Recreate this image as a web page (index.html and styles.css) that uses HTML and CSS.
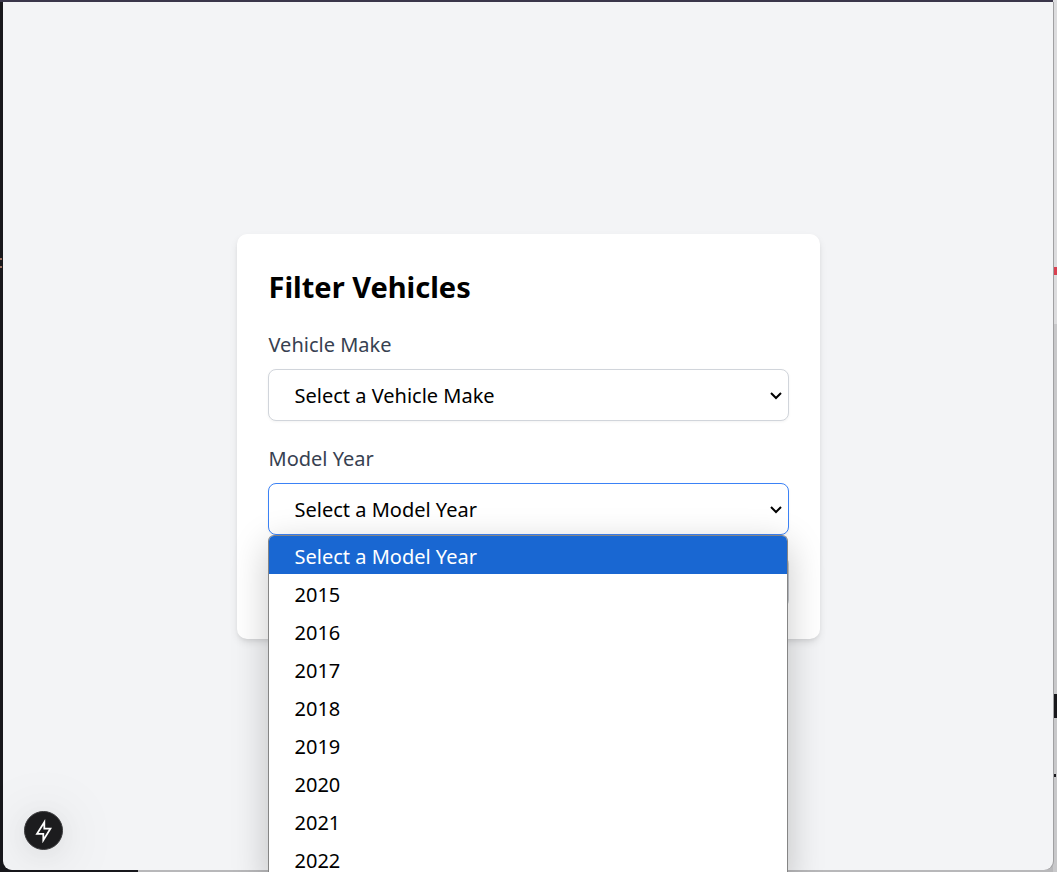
FILE: index.html
```html
<!DOCTYPE html>
<html lang="en">
<head>
<meta charset="utf-8">
<meta name="viewport" content="width=device-width, initial-scale=1">
<title>Filter Vehicles</title>
<link rel="stylesheet" href="styles.css">
</head>
<body>
<main class="window">
  <form class="card">
    <h1 class="title">Filter Vehicles</h1>
    <div class="field">
      <label class="label" for="make">Vehicle Make</label>
      <div class="control">
        <select class="select" id="make"><option>Select a Vehicle Make</option></select>
        <svg class="chevron" viewBox="0 0 14 10" aria-hidden="true"><path d="M2 3l5 5 5-5"/></svg>
      </div>
    </div>
    <div class="field">
      <label class="label" for="year">Model Year</label>
      <div class="control">
        <select class="select select-open" id="year"><option>Select a Model Year</option></select>
        <svg class="chevron" viewBox="0 0 14 10" aria-hidden="true"><path d="M2 3l5 5 5-5"/></svg>
        <ul class="menu" role="listbox" aria-label="Model Year">
          <li class="option option-active" role="option" aria-selected="true">Select a Model Year</li>
          <li class="option" role="option">2015</li>
          <li class="option" role="option">2016</li>
          <li class="option" role="option">2017</li>
          <li class="option" role="option">2018</li>
          <li class="option" role="option">2019</li>
          <li class="option" role="option">2020</li>
          <li class="option" role="option">2021</li>
          <li class="option" role="option">2022</li>
        </ul>
      </div>
    </div>
    <button class="submit" type="button" aria-label="Submit" disabled></button>
  </form>
  <button class="badge" type="button" aria-label="Static route">
    <svg class="bolt" viewBox="0 0 18 24" aria-hidden="true"><path d="M9.300 3.200L2 14.800h6.300v6.400L15.400 9.600H9.300z"/></svg>
  </button>
</main>
</body>
</html>
```
FILE: styles.css
```css
* { box-sizing: border-box; }

body {
  margin: 0;
  height: 100vh;
  padding: 2px 4px 2px 3px;
  overflow: hidden;
  font-family: "Segoe UI", "Noto Sans", sans-serif;
  font-size: 20px;
  line-height: 32px;
  color: #000;
  background:
    linear-gradient(#3a364a, #3a364a) 0 0 / calc(100% - 4px) 2px no-repeat,
    linear-gradient(#9a7060, #9a7060) 0 258px / 2px 2px no-repeat,
    linear-gradient(#9a7060, #9a7060) 0 266px / 2px 2px no-repeat,
    linear-gradient(#d84050, #d84050) 100% 267px / 3px 8px no-repeat,
    linear-gradient(#18181c, #18181c) 100% 694px / 4px 24px no-repeat,
    linear-gradient(#18181c, #18181c) calc(100% - 1px) 774px / 3px 3px no-repeat,
    linear-gradient(#18181c, #18181c) 0 0 / 3px 100% no-repeat,
    linear-gradient(#18181c, #18181c) 0 100% / 138px 12px no-repeat,
    linear-gradient(#dcdcde 0 324px, #c8c8ca 324px) 100% 0 / 4px 100% no-repeat,
    #b8b8ba;
}

.window {
  position: relative;
  height: 100%;
  display: grid;
  place-items: center;
  background: #f3f4f6;
  border-radius: 0 0 9px 9px;
  box-shadow: 1px 0 0 #a0a0a2;
}

.card {
  width: 100%;
  max-width: 583px;
  padding: 31px;
  display: flex;
  flex-direction: column;
  gap: 21px;
  background: #fff;
  border-radius: 10px;
  box-shadow: 0 4px 8px -1px #0000001a, 0 2px 5px -2px #0000001a;
}

.title {
  margin: 0;
  padding: 1px 1px 0;
  font-size: 29px;
  line-height: 41px;
  font-weight: 700;
}

.field {
  display: flex;
  flex-direction: column;
  gap: 8px;
}

.label {
  padding: 1px 1px 0;
  color: #374151;
}

.control {
  position: relative;
  display: grid;
  align-items: center;
}

.select {
  grid-area: 1 / 1;
  width: 100%;
  height: 52px;
  padding: 3px 26px 0;
  appearance: none;
  font: inherit;
  color: #000;
  background: #fff;
  border: 1px solid #d1d5db;
  border-radius: 8px;
  box-shadow: 0 1px 3px #0000000d;
}

.select-open {
  border-color: #3b82f6;
  outline: none;
}

.chevron {
  grid-area: 1 / 1;
  justify-self: end;
  width: 14px;
  height: 10px;
  margin-right: 6px;
  pointer-events: none;
  fill: none;
  stroke: #000;
  stroke-width: 2;
}

.menu {
  position: absolute;
  top: 100%;
  left: 0;
  right: 1px;
  z-index: 1;
  margin: 0;
  padding: 0;
  list-style: none;
  background: #fff;
  border: 1px solid #858585;
  border-bottom: 0;
  border-radius: 6px 6px 0 0;
  box-shadow: 0 10px 36px #00000038;
}

.option {
  padding: 5px 26px 1px;
}

.option-active {
  color: #fff;
  background: #1967d2;
  border-radius: 5px 5px 0 0;
}

.submit {
  height: 52px;
  border: 0;
  border-radius: 8px;
  background: #c4c8ce;
}

.badge {
  position: absolute;
  left: 21px;
  bottom: 20px;
  width: 39px;
  height: 39px;
  padding: 0;
  display: grid;
  place-items: center;
  background: #1c1c1e;
  border: 1px solid #3c3c3e;
  border-radius: 50%;
  box-shadow: 0 6px 60px #00000026, 0 4px 24px #0000000d;
}

.bolt {
  width: 18px;
  height: 24px;
  fill: none;
  stroke: #fff;
  stroke-width: 1.8;
}
```
